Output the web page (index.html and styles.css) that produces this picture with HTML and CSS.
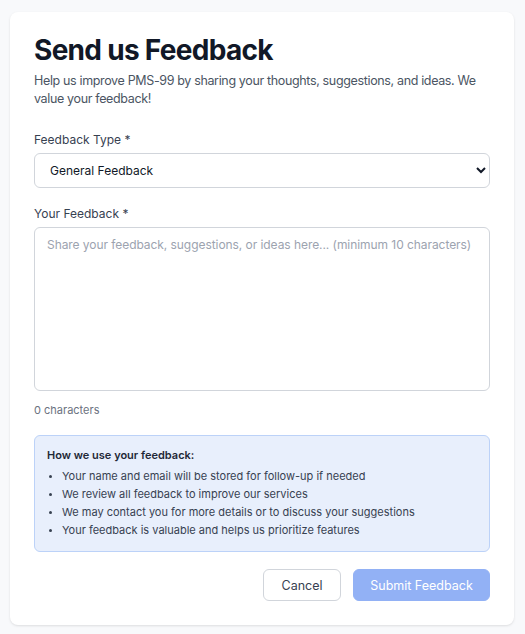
FILE: index.html
```html
<!DOCTYPE html>
<html lang="en">
<head>
<meta charset="utf-8">
<title>Send us Feedback</title>
<link rel="stylesheet" href="styles.css">
</head>
<body>
<main class="card">
  <h1 class="title">Send us Feedback</h1>
  <p class="subtitle">Help us improve PMS-99 by sharing your thoughts, suggestions, and ideas. We value your feedback!</p>

  <form class="form">
    <div class="field">
      <label class="label" for="type">Feedback Type *</label>
      <select id="type" class="select">
        <option>General Feedback</option>
        <option>Bug Report</option>
        <option>Feature Request</option>
      </select>
    </div>

    <div class="field field-text">
      <label class="label" for="msg">Your Feedback *</label>
      <textarea id="msg" class="textarea" placeholder="Share your feedback, suggestions, or ideas here... (minimum 10 characters)"></textarea>
      <div class="count">0 characters</div>
    </div>

    <div class="info">
      <div class="info-title">How we use your feedback:</div>
      <ul class="info-list">
        <li>Your name and email will be stored for follow-up if needed</li>
        <li>We review all feedback to improve our services</li>
        <li>We may contact you for more details or to discuss your suggestions</li>
        <li>Your feedback is valuable and helps us prioritize features</li>
      </ul>
    </div>

    <div class="actions">
      <button type="button" class="btn btn-cancel">Cancel</button>
      <button type="button" class="btn btn-submit" disabled>Submit Feedback</button>
    </div>
  </form>
</main>
</body>
</html>
```

FILE: styles.css
```css
* { box-sizing: border-box; }

html, body {
  margin: 0;
  padding: 0;
}

body {
  background: #f8f9fb;
  font-family: Inter, "Noto Sans", sans-serif;
  color: #374151;
  padding: 12px 11px 9px 10px;
}

.card {
  background: #ffffff;
  border-radius: 8px;
  box-shadow: 0 1px 3px rgba(0,0,0,0.08), 0 1px 2px rgba(0,0,0,0.04);
  padding: 24px;
}

.title {
  margin: 0;
  font-size: 28px;
  line-height: 28px;
  font-weight: 700;
  color: #111827;
  letter-spacing: -0.7px;
}

.subtitle {
  margin: 8px 0 0 0;
  font-size: 12.5px;
  line-height: 18px;
  color: #4b5563;
  letter-spacing: -0.35px;
}

.form {
  margin-top: 24px;
  display: flex;
  flex-direction: column;
}

.field {
  display: flex;
  flex-direction: column;
}

.field-text {
  margin-top: 18px;
}

.label {
  font-size: 12px;
  line-height: 16px;
  color: #374151;
  margin-bottom: 5px;
}

.select {
  height: 35px;
  width: 100%;
  border: 1px solid #d1d5db;
  border-radius: 6px;
  background: #ffffff;
  font-family: Inter, "Noto Sans", sans-serif;
  font-size: 12px;
  color: #111827;
  padding: 0 6px 0 11px;
}

.textarea {
  display: block;
  width: 100%;
  height: 164px;
  border: 1px solid #d1d5db;
  border-radius: 6px;
  padding: 8px 12px;
  font-family: Inter, "Noto Sans", sans-serif;
  font-size: 12px;
  line-height: 18px;
  letter-spacing: -0.06px;
  color: #111827;
  resize: none;
}

.textarea::placeholder {
  color: #9ca3af;
}

.count {
  margin-top: 11px;
  font-size: 11px;
  line-height: 16px;
  color: #6b7280;
}

.info {
  margin-top: 17px;
  background: #e8effc;
  border: 1px solid #bcd2f8;
  border-radius: 6px;
  padding: 11px 12px 12px 12px;
}

.info-title {
  font-size: 11px;
  line-height: 16px;
  font-weight: 600;
  color: #1f2937;
}

.info-list {
  margin: 4px 0 0 0;
  padding: 0 0 0 15px;
  font-size: 11px;
  line-height: 18px;
  color: #374151;
}

.info-list li::marker {
  font-size: 9px;
}

.actions {
  margin-top: 17px;
  display: flex;
  justify-content: flex-end;
  gap: 12px;
}

.btn {
  height: 32px;
  border-radius: 6px;
  font-family: Inter, "Noto Sans", sans-serif;
  font-size: 12.5px;
  padding: 0;
  white-space: nowrap;
  cursor: pointer;
}

.btn-cancel {
  background: #ffffff;
  border: 1px solid #d1d5db;
  color: #374151;
  width: 78px;
}

.btn-submit {
  background: #92b1f5;
  border: 1px solid #92b1f5;
  color: #ffffff;
  width: 137px;
}
```
